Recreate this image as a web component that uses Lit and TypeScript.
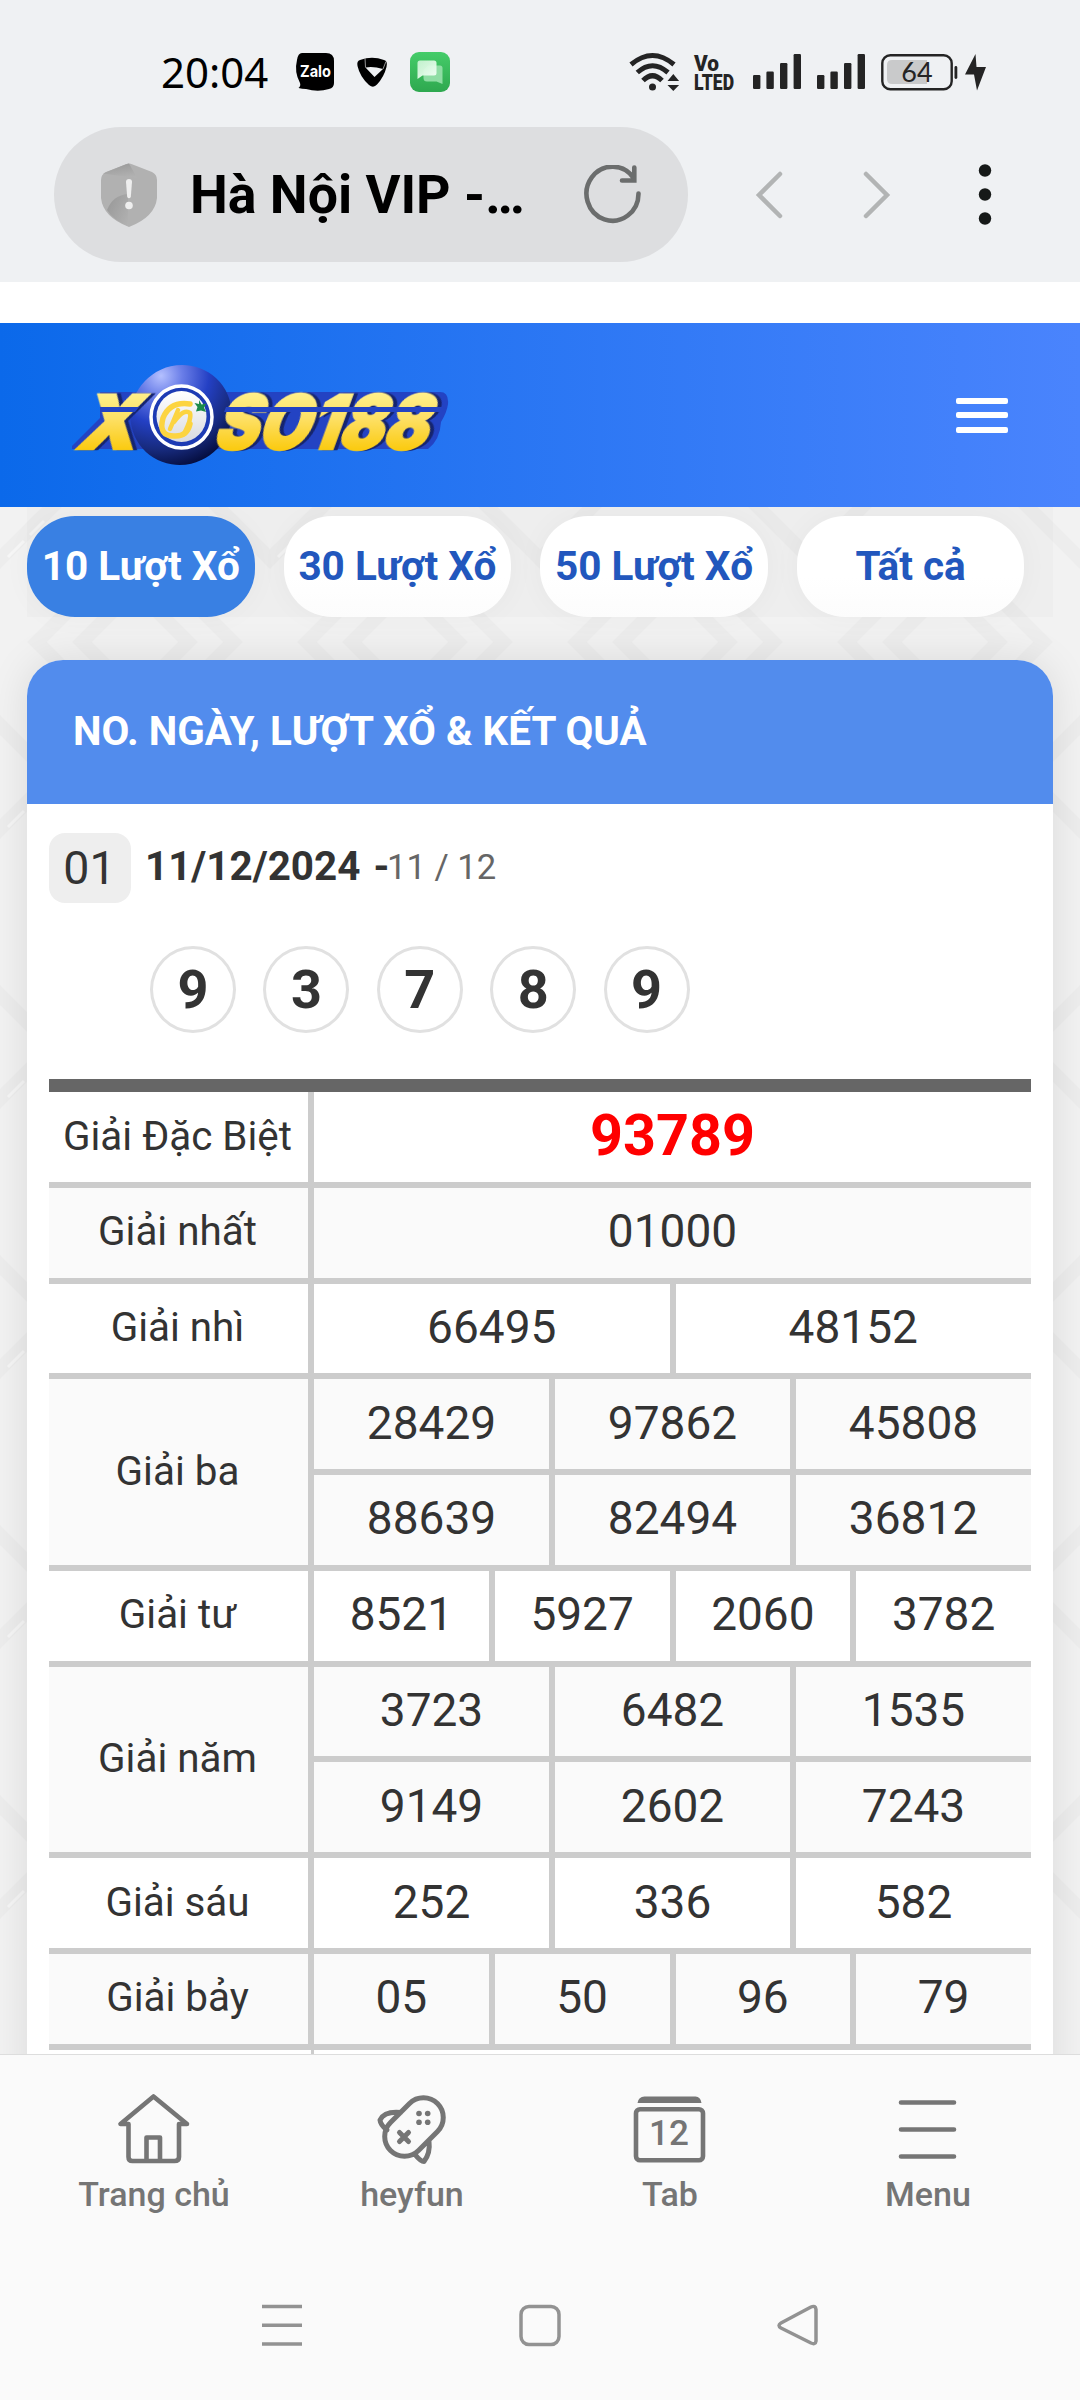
import { LitElement, html, css, svg } from "lit";
import { customElement } from "lit/decorators.js";

const filters = ["10 Lượt Xổ", "30 Lượt Xổ", "50 Lượt Xổ", "Tất cả"];

const prizes: { name: string; rows: string[][] }[] = [
  { name: "Giải Đặc Biệt", rows: [["93789"]] },
  { name: "Giải nhất", rows: [["01000"]] },
  { name: "Giải nhì", rows: [["66495", "48152"]] },
  { name: "Giải ba", rows: [["28429", "97862", "45808"], ["88639", "82494", "36812"]] },
  { name: "Giải tư", rows: [["8521", "5927", "2060", "3782"]] },
  { name: "Giải năm", rows: [["3723", "6482", "1535"], ["9149", "2602", "7243"]] },
  { name: "Giải sáu", rows: [["252", "336", "582"]] },
  { name: "Giải bảy", rows: [["05", "50", "96", "79"]] },
];

const signal = svg`
  <rect x="0" y="21" width="7.4" height="14" rx="1.2"/>
  <rect x="13.4" y="17.5" width="7.4" height="17.5" rx="1.2"/>
  <rect x="27" y="9" width="7.4" height="26" rx="1.2"/>
  <rect x="40.6" y="0" width="7.4" height="35" rx="1.2"/>`;

@customElement("status-bar")
class StatusBar extends LitElement {
  static styles = css`
    :host { display: flex; height: 127px; box-sizing: border-box; padding: 16px 91px 0 161px; align-items: center; }
    .time { font: 42px/58px "Noto Sans", sans-serif; color: #000; width: 135px; white-space: nowrap; }
    .apps { display: flex; align-items: center; gap: 23px; }
    .right { margin-left: auto; display: flex; align-items: center; }
    svg { display: block; overflow: visible; }
    .right svg { fill: #242424; }
    .volte { margin-left: 14px; font: 900 22px Roboto, sans-serif; }
    .sig { margin-left: 18px; }
    .sig.two { margin-left: 16px; }
    .bat { margin-left: 16px; }
  `;
  render() {
    return html`
      <div class="time">20:04</div>
      <div class="apps">
        <svg width="38" height="40" viewBox="0 0 38 40">
          <path d="M6 1H30Q38 1 38 9V31Q38 36 33 37Q22 40.500 10 37Q6 37 2.500 36Q5 34 4 31Q-2 20 1 8Q2 1 6 1Z" fill="#000"/>
          <text x="4" y="24.500" font-family="Inter, sans-serif" font-weight="700" font-size="16.500" fill="#fff" textLength="31" lengthAdjust="spacingAndGlyphs">Zalo</text>
        </svg>
        <svg width="30" height="30" viewBox="0 0 30 30">
          <path fill-rule="evenodd" d="M3 3Q15-1.500 27 3Q31 4 29.500 10Q27 20 20 27.500Q16.500 31.500 12 28Q3 20 .500 9Q-.500 4 3 3ZM8.500 10.500Q16 9 26 12L17.500 20Z" fill="#000"/>
          <path d="M8 1L8.500 10.500M29 4.500L26 12" stroke="#bbb" stroke-width=".8"/>
        </svg>
        <svg width="40" height="40" viewBox="0 0 40 40">
          <defs>
            <linearGradient id="g" x2="0" y2="1"><stop stop-color="#45cc69"/><stop offset="1" stop-color="#2ea84f"/></linearGradient>
            <linearGradient id="b" x2=".8" y2="1"><stop stop-color="#c8f3d2"/><stop offset="1" stop-color="#f2fff5"/></linearGradient>
          </defs>
          <rect width="40" height="40" rx="9" fill="url(#g)"/>
          <path d="M18 13.500H30Q32.500 13.500 32.500 16V32L26.500 29.500H17Q13.500 29.500 13.500 26V18Z" fill="#8fdda4"/>
          <path d="M10 8.500H24Q26.500 8.500 26.500 11V21Q26.500 23.500 24 23.500H12.500L7.500 27V11Q7.500 8.500 10 8.500Z" fill="url(#b)" fill-opacity=".95"/>
        </svg>
      </div>
      <div class="right">
        <svg width="51" height="40" viewBox="628.500 51 51 40">
          <g fill="none" stroke="#242424" stroke-width="5">
            <path d="M630.500 63.500Q652 45.500 673.500 63.500M636.800 71.500Q652 58 667.500 71.500M642.500 79.500Q652 70 661.500 79.500"/>
          </g>
          <circle cx="652" cy="86" r="3.500"/>
          <path d="M672.800 73L667 80H678.600ZM667 84H678.600L672.800 90Z"/>
        </svg>
        <svg class="volte" width="41" height="36" viewBox="0 0 41 36">
          <text x="0" y="17" textLength="25" lengthAdjust="spacingAndGlyphs">Vo</text>
          <text x="0" y="35.500" textLength="40" lengthAdjust="spacingAndGlyphs">LTED</text>
        </svg>
        <svg class="sig" width="48" height="36" viewBox="0 0 48 36">${signal}</svg>
        <svg class="sig two" width="48" height="36" viewBox="0 0 48 36">${signal}</svg>
        <svg class="bat" width="108" height="38" viewBox="0 0 108 38">
          <rect x="1.300" y="2.300" width="69.400" height="34" rx="8" fill="none" stroke="#242424" stroke-width="2.400"/>
          <path d="M11 7H46V31H11Q6 31 6 26V12Q6 7 11 7Z" fill="#c9cacb"/>
          <rect x="73.500" y="13" width="2.800" height="13" rx="1.400"/>
          <text x="36" y="29" font-family="Lato, sans-serif" font-size="27" text-anchor="middle">64</text>
          <path d="M94.500 1L84 21.500H93L96 37.500L105 14H95.500Z"/>
        </svg>
      </div>`;
  }
}

@customElement("url-bar")
class UrlBar extends LitElement {
  static styles = css`
    :host { display: flex; height: 154px; align-items: flex-start; }
    .pill { margin-left: 54px; width: 634px; height: 135px; border-radius: 68px; background: #dddee0; display: flex; align-items: center; justify-content: space-between; box-sizing: border-box; padding: 0 44px 0 47px; }
    .title { font: 700 53.600px/70px Roboto, sans-serif; color: #000; margin: 0 auto 0 33px; white-space: nowrap; }
    .ctl { height: 135px; display: flex; align-items: center; }
    .back { margin-left: 67px; }
    .fwd { margin-left: 80px; }
    .dots { margin-left: 82px; }
    svg { display: block; flex: none; }
  `;
  render() {
    return html`
      <div class="pill">
        <svg width="56" height="66" viewBox="0 0 56 66">
          <defs>
            <linearGradient id="s" x1=".3" y1="0" x2=".6" y2="1"><stop stop-color="#999"/><stop offset="1" stop-color="#b2b2b2"/></linearGradient>
            <linearGradient id="t" x1="1" y1="1" x2="0" y2=".3"><stop stop-color="#b2b2b2"/><stop offset="1" stop-color="#9a9a9a"/></linearGradient>
          </defs>
          <path d="M28 1.500Q29.500 1.500 31 2.200L51 10Q56 12.500 56 18V36Q54 55 28 65Q2 55 0 36V18Q0 12.500 5 10L25 2.200Q26.500 1.500 28 1.500Z" fill="#b1b1b1"/>
          <path d="M28 1.500L36 16Q18 14 2 11.500L25 2.200Z" fill="url(#s)"/>
          <path d="M6 48Q12 33 27 32V64Q12 58 6 48Z" fill="url(#t)"/>
          <path d="M25 20Q25 17 28 17Q31 17 31 20L29.800 35Q28 37.500 26.200 35Z" fill="#eee"/>
          <circle cx="28" cy="43.500" r="3.800" fill="#eee"/>
        </svg>
        <div class="title">Hà Nội VIP -…</div>
        <svg width="60" height="60" viewBox="584 165 60 60" fill="none" stroke="#6b6d6d" stroke-width="4.600" stroke-linecap="round" stroke-linejoin="miter">
          <path d="M638.500 193.500A26 27 0 1 1 634 178.500M634.300 167.500V180.500H622"/>
        </svg>
      </div>
      <div class="ctl back">
        <svg width="28" height="48" viewBox="0 0 28 48" fill="none" stroke="#b2b4b4" stroke-width="4.500" stroke-linecap="round"><path d="M25 3L4 24L25 45"/></svg>
      </div>
      <div class="ctl fwd">
        <svg width="28" height="48" viewBox="0 0 28 48" fill="none" stroke="#b2b4b4" stroke-width="4.500" stroke-linecap="round"><path d="M3 3L24 24L3 45"/></svg>
      </div>
      <div class="ctl dots">
        <svg width="24" height="64" viewBox="0 0 24 64" fill="#161918"><circle cx="12" cy="7.500" r="6.200"/><circle cx="12" cy="31.500" r="6.200"/><circle cx="12" cy="55.500" r="6.200"/></svg>
      </div>`;
  }
}

@customElement("site-header")
class SiteHeader extends LitElement {
  static styles = css`
    :host { display: flex; height: 184px; box-sizing: border-box; padding: 0 72px; align-items: center; justify-content: space-between; background: linear-gradient(90deg, #0b69ea, #4a84fd); }
    svg { display: block; overflow: visible; font: 900 75px/1 Inter, sans-serif; }
    .gold { fill: url(#gold); stroke: url(#gold); stroke-width: 2.500px; filter: drop-shadow(4px 0 0 #15246f); }
    .burger { width: 52px; display: flex; flex-direction: column; gap: 8.500px; }
    .line { height: 6px; border-radius: 2px; background: #fff; }
  `;
  render() {
    return html`
      <svg width="376" height="104" viewBox="72 363 376 104">
        <defs>
          <linearGradient id="gold" gradientUnits="userSpaceOnUse" x1="0" y1="-56" x2="0" y2="0"><stop stop-color="#fff08a"/><stop offset=".45" stop-color="#fde066"/><stop offset="1" stop-color="#fbcb12"/></linearGradient>
          <radialGradient id="ball" cx=".56" cy=".06" r=".95"><stop stop-color="#b4c0ff"/><stop offset=".22" stop-color="#6a7ee8"/><stop offset=".5" stop-color="#2440c4"/><stop offset=".78" stop-color="#172a7c"/><stop offset="1" stop-color="#040c3c"/></radialGradient>
          <linearGradient id="disc" x2="0" y2="1"><stop stop-color="#fff"/><stop offset="1" stop-color="#d9dbe0"/></linearGradient>
        </defs>
        <path d="M100 392H440Q449 392 448 404Q447 412 441 422Q440 440 428 449H72V446L100 418Z" fill="#2343c3"/>
        <ellipse cx="181" cy="415" rx="51" ry="49.500" transform="rotate(-35 181 415)" fill="url(#ball)"/>
        <text class="gold" transform="translate(207 449) skewX(-20)" x="4" y="0" textLength="214" lengthAdjust="spacingAndGlyphs">SO188</text>
        <text class="gold" transform="translate(75 449) skewX(-20)" x="0" y="0" textLength="58" lengthAdjust="spacingAndGlyphs">X</text>
        <path d="M100 407H139L135 412H100ZM226 407H446L442 412H224Z" fill="#2343c3"/>
        <ellipse cx="181.500" cy="417" rx="30.500" ry="31" fill="#1d3bb4" stroke="#fff" stroke-width="3.500"/>
        <ellipse cx="181.500" cy="416.500" rx="25" ry="25.500" fill="url(#disc)"/>
        <g fill="none" stroke="#fcd440" stroke-linecap="round">
          <path d="M190 404Q170 401 163 418Q158 436 174 436Q187 437 190 424" stroke-width="5.500"/>
          <path d="M170 429L178 410M174 422Q184 408 190 413Q192 418 184 434" stroke-width="4.500"/>
        </g>
        <path d="M199 400L201.500 404.500L206.500 403.500L204 407.500L206 412L201 410.500L196 411.500L197.500 407L194.500 403L199 404Z" fill="#1b8a4b"/>
      </svg>
      <div class="burger"><div class="line"></div><div class="line"></div><div class="line"></div></div>`;
  }
}

@customElement("results-card")
class ResultsCard extends LitElement {
  static styles = css`
    :host { display: block; background: #fff; border-radius: 36px 36px 0 0; box-shadow: 0 0 42px rgba(0, 0, 0, 0.1); height: 1500px; font-family: Roboto, sans-serif; color: #333; }
    .head { height: 144px; box-sizing: border-box; padding: 0 46px 2px; display: flex; align-items: center; border-radius: 36px 36px 0 0; background: #528ced; color: #fff; font-size: 40.400px; font-weight: 700; white-space: nowrap; }
    .body { padding: 29px 22px 0; }
    .date { display: flex; align-items: center; height: 70px; white-space: nowrap; }
    .no { width: 82px; height: 70px; border-radius: 16px; background: #eee; font-size: 46.500px; display: flex; align-items: center; justify-content: center; padding: 0 1px 1px 0; box-sizing: border-box; }
    .day { font-size: 40.400px; font-weight: 700; margin-left: 14px; padding-bottom: 3px; width: 242px; word-spacing: 3px; }
    .turn { font-size: 34.600px; color: #666; padding-bottom: 2px; }
    .balls { display: flex; gap: 27.400px; margin: 43px 0 46px 101px; }
    .ball { width: 86px; height: 87px; box-sizing: border-box; border: 3px solid #e1e1e1; border-radius: 50%; display: flex; align-items: center; justify-content: center; font-size: 54px; font-weight: 700; padding-bottom: 1px; }
    .table { border-top: 13px solid #666; display: flex; flex-direction: column; }
    .prize { display: flex; border-bottom: 6px solid #ccc; box-sizing: border-box; }
    .prize.alt { background: #fafafa; }
    .label { width: 259px; display: flex; align-items: center; justify-content: center; font-size: 40.400px; padding: 0 2px 2px 0; box-sizing: border-box; white-space: nowrap; }
    .vals { flex: 1; display: flex; flex-direction: column; }
    .row { display: flex; height: 89.780px; }
    .row + .row { border-top: 6px solid #ccc; }
    .cell { flex: 1 1 0; border-left: 6px solid #ccc; display: flex; align-items: center; justify-content: center; font-size: 46px; padding: 0 0 3px; box-sizing: border-box; }
    .prize:first-child .cell { color: #f00; font-size: 57.500px; font-weight: 700; padding-bottom: 2px; }
    .prize:first-child .label { padding-bottom: 1px; }
    .next { height: 20px; margin-left: 262px; border-left: 3px solid #ccc; }
  `;
  render() {
    return html`
      <div class="head">NO. NGÀY, LƯỢT XỔ &amp; KẾT QUẢ</div>
      <div class="body">
        <div class="date"><div class="no">01</div><div class="day">11/12/2024 -</div><div class="turn">11 / 12</div></div>
        <div class="balls">${["9", "3", "7", "8", "9"].map((d) => html`<div class="ball">${d}</div>`)}</div>
        <div class="table">
          ${prizes.map(
            (p, i) => html`<div class="prize ${i % 2 ? "alt" : ""}">
              <div class="label">${p.name}</div>
              <div class="vals">
                ${p.rows.map((r) => html`<div class="row">${r.map((v) => html`<div class="cell">${v}</div>`)}</div>`)}
              </div>
            </div>`
          )}
        </div>
        <div class="next"></div>
      </div>`;
  }
}

@customElement("browser-nav")
class BrowserNav extends LitElement {
  static styles = css`
    :host { display: block; height: 346px; box-sizing: border-box; border-top: 1px solid #ddd; background: #fafafa; font-family: Roboto, sans-serif; color: #757575; }
    .tabs { display: grid; grid-template-columns: repeat(4, 258px); padding: 37px 0 0 25px; height: 247.500px; box-sizing: border-box; }
    .tab { display: flex; flex-direction: column; align-items: center; gap: 4px; font-size: 34px; line-height: 44px; font-weight: 500; }
    .sys { display: grid; grid-template-columns: repeat(3, 258px); justify-content: center; justify-items: center; }
    svg { display: block; fill: none; stroke: #757575; stroke-width: 4.600; stroke-linejoin: round; stroke-linecap: round; }
    .sys svg { stroke: #929292; stroke-width: 3.500; }
    .num { fill: #757575; stroke: none; font: 500 35px Roboto, sans-serif; }
    .solid { fill: #757575; stroke: none; }
  `;
  render() {
    return html`
      <div class="tabs">
        <div class="tab">
          <svg width="76" height="76" viewBox="115.500 2092 76 76">
            <path d="M153 2096.500L120 2124H128V2157Q128 2161 132 2161H174Q178.500 2161 178.500 2157V2124H186.500ZM146 2161V2137.500H159.500V2161"/>
          </svg>
          Trang chủ
        </div>
        <div class="tab">
          <svg width="76" height="76" viewBox="374.500 2092 76 76">
            <path d="M410 2103.500A19.500 19.500 0 0 1 438 2131.500L419 2150.500A19.500 19.500 0 0 1 391 2122.500ZM401 2112.500Q385 2111 380.500 2120Q381 2125 387.500 2130M429.500 2141.500Q431 2153 424.500 2161.500Q421 2161.500 415.500 2154.500" stroke-width="5"/>
            <path d="M400 2132.500L409 2141.500M409 2132.500L400 2141.500" stroke-width="5"/>
            <g class="solid"><circle cx="419.500" cy="2113.500" r="2.800"/><circle cx="428.200" cy="2113.500" r="2.800"/><circle cx="419.500" cy="2122.300" r="2.800"/><circle cx="428.200" cy="2122.300" r="2.800"/></g>
          </svg>
          heyfun
        </div>
        <div class="tab">
          <svg width="76" height="76" viewBox="631.500 2092 76 76">
            <path class="solid" d="M637 2103Q638 2096.500 644 2096.500H695Q700 2096.500 701 2103Z"/>
            <rect x="635.500" y="2109.300" width="67" height="51" rx="4"/>
            <text class="num" x="668.500" y="2145" text-anchor="middle">12</text>
          </svg>
          Tab
        </div>
        <div class="tab">
          <svg width="76" height="76" viewBox="889.500 2092 76 76">
            <path d="M900.500 2102.500H953.500M900.500 2129.500H953.500M900.500 2156.500H953.500"/>
          </svg>
          Menu
        </div>
      </div>
      <div class="sys">
        <svg width="44" height="44" viewBox="0 0 44 44"><path d="M2 3.500H42M2 22.200H42M2 41H42" stroke-linecap="butt"/></svg>
        <svg width="44" height="44" viewBox="0 0 44 44"><rect x="3" y="3.500" width="38" height="38" rx="8"/></svg>
        <svg width="44" height="44" viewBox="0 0 44 44"><path d="M5 20L35 4Q39.500 2 40 6.500V38Q39.500 42 35 40L5 25Q1 22.500 5 20Z"/></svg>
      </div>`;
  }
}

@customElement("app-root")
class AppRoot extends LitElement {
  static styles = css`
    :host { display: flex; flex-direction: column; width: 1080px; height: 2400px; overflow: hidden; background: #fff; }
    .chrome { background: #eff1f3; height: 282px; margin-bottom: 41px; flex: none; }
    site-header, browser-nav { flex: none; }
    .page { flex: 1; min-height: 0; position: relative; overflow: hidden; background: #f2f2f2; }
    .pattern { position: absolute; inset: 0; width: 100%; height: 100%; }
    .content { position: relative; padding: 0 27px; }
    .filters { display: grid; grid-template-columns: repeat(4, 227.600px); gap: 29px; padding-top: 9px; background: rgba(0, 0, 0, 0.015); }
    .filter { height: 101px; border-radius: 48px; background: linear-gradient(#fff 60%, #fcfcfc); color: #2257bd; font: 700 40.500px Roboto, sans-serif; display: flex; align-items: center; justify-content: center; white-space: nowrap; box-sizing: border-box; padding-bottom: 2px; box-shadow: 0 0 30px rgba(0, 0, 0, 0.035); }
    .filter.on { background: #3980e3; color: #fff; }
    results-card { margin-top: 43px; }
  `;
  render() {
    return html`
      <div class="chrome"><status-bar></status-bar><url-bar></url-bar></div>
      <site-header></site-header>
      <div class="page">
        <svg class="pattern">
          <defs>
            <pattern id="p" width="270" height="270" patternUnits="userSpaceOnUse">
              <g fill="none" stroke="#ededed" stroke-width="14">
                <path d="M135 37L233 135L135 233L37 135ZM135 82L188 135L135 188L82 135Z"/>
                <path d="M-10 62L62-10M208 280L280 208M-10 208L62 280M208-10L280 62"/>
                <path d="M8 50L24 34M30 28L44 14" stroke="#f6f6f6" stroke-width="3"/>
              </g>
            </pattern>
          </defs>
          <rect width="100%" height="100%" fill="url(#p)"/>
        </svg>
        <div class="content">
          <div class="filters">${filters.map((f, i) => html`<div class="filter ${i === 0 ? "on" : ""}">${f}</div>`)}</div>
          <results-card></results-card>
        </div>
      </div>
      <browser-nav></browser-nav>`;
  }
}
